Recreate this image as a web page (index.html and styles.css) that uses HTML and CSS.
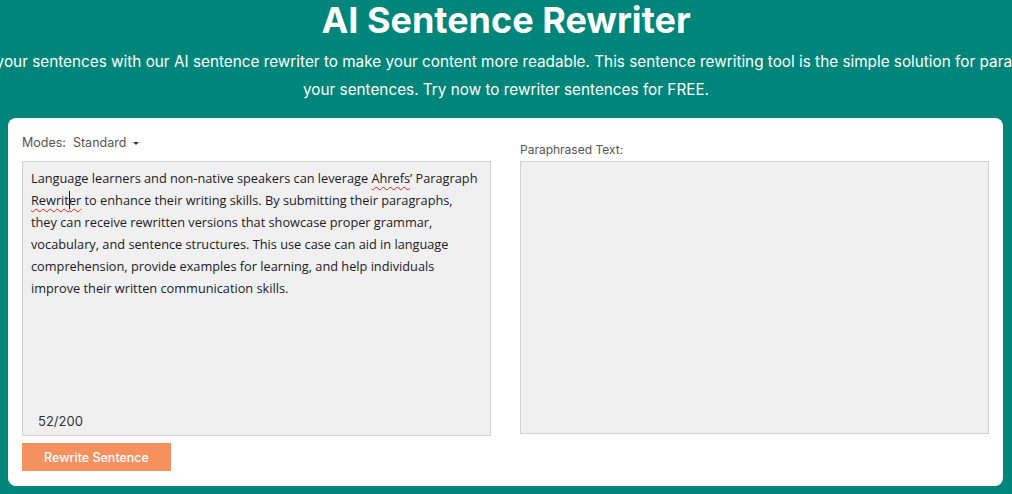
FILE: index.html
```html
<!DOCTYPE html>
<html lang="en">
<head>
    <meta charset="UTF-8">
    <meta name="viewport" content="width=device-width, initial-scale=1.0">
    <title>AI Sentence Rewriter</title>
    <link rel="stylesheet" href="styles.css">
</head>
<body>
    <header class="hero">
        <h1>AI Sentence Rewriter</h1>
        <div class="intro">
            <p>Rewrite your sentences with our AI sentence rewriter to make your content more readable. This sentence rewriting tool is the simple solution for paraphrasing<br>your sentences. Try now to rewriter sentences for FREE.</p>
        </div>
    </header>

    <div class="tool-card">
        <div class="tool-column">
            <!-- input side -->
            <div class="column-head">
                <span class="modes-label">Modes:</span>
                <span class="modes-value">Standard</span>
                <span class="caret"></span>
            </div>
            <div class="text-box input-box">
                <div class="input-text">Language learners and non-native speakers can leverage <span class="misspelled">Ahrefs</span>&rsquo; Paragraph <span class="misspelled cursor">Rewrit</span><span class="misspelled">er</span> to enhance their writing skills. By submitting their paragraphs, they can receive rewritten versions that showcase proper grammar, vocabulary, and sentence structures. This use case can aid in language comprehension, provide examples for learning, and help individuals improve their written communication skills.</div>
                <div class="counter">52/200</div>
            </div>
            <button class="rewrite-btn">Rewrite Sentence</button>
        </div>

        <div class="tool-column">
            <!-- output side -->
            <div class="column-head output-head">
                <span class="output-label">Paraphrased Text:</span>
            </div>
            <div class="text-box output-box"></div>
        </div>
    </div>
</body>
</html>
```

FILE: styles.css
```css
body {
  margin: 0;
  background-color: #00857a;
  font-family: Inter, "Noto Sans", sans-serif;
  overflow-x: hidden;
}

.hero {
  color: #fff;
  text-align: center;
}

.hero h1 {
  margin: 0;
  font-size: 36px;
  line-height: 40px;
  font-weight: 700;
}

.intro {
  display: flex;
  justify-content: center;
  margin-top: 8px;
}

.intro p {
  margin: 0;
  white-space: nowrap;
  font-size: 15.3px;
  line-height: 28px;
  flex-shrink: 0;
}

.tool-card {
  display: grid;
  grid-template-columns: 1fr 1fr;
  gap: 29px;
  margin: 14px 0 0 8px;
  width: 995px;
  box-sizing: border-box;
  padding: 15px 14px 15px 14px;
  background-color: #fff;
  border-radius: 8px;
}

.tool-column {
  display: flex;
  flex-direction: column;
}

.column-head {
  height: 28px;
  display: flex;
  align-items: flex-start;
  font-size: 12.5px;
  line-height: 20px;
  color: #555;
}

.modes-label {
  margin-right: 7px;
}

.caret {
  width: 0;
  height: 0;
  margin: 9px 0 0 7px;
  border-left: 3px solid transparent;
  border-right: 3px solid transparent;
  border-top: 3px solid #333;
}

.output-head {
  align-items: flex-end;
}

.output-label {
  font-size: 12px;
  line-height: 16px;
  padding-bottom: 3px;
}

.text-box {
  background-color: #f0f0f0;
  border: 1px solid #d2d2d2;
  box-sizing: border-box;
}

.input-box {
  height: 275px;
  display: flex;
  flex-direction: column;
  padding: 5px 12px 5px 8px;
}

.input-text {
  font-family: "Open Sans", sans-serif;
  font-size: 12.75px;
  line-height: 22px;
  color: #1a1a26;
}

.misspelled {
  text-decoration: underline wavy #e0201c;
  text-decoration-thickness: 1px;
  text-underline-offset: 3px;
}

.cursor {
  box-shadow: 1px 0 0 #111;
}

.counter {
  margin-top: auto;
  padding-left: 7px;
  font-size: 13px;
  line-height: 18px;
  color: #333;
}

.output-box {
  height: 273px;
}

.rewrite-btn {
  align-self: flex-start;
  margin-top: 7px;
  width: 149px;
  height: 28px;
  border: none;
  background-color: #f4915f;
  color: #fff;
  font-family: Inter, "Noto Sans", sans-serif;
  font-size: 12.5px;
  font-weight: 500;
  cursor: pointer;
}
```
